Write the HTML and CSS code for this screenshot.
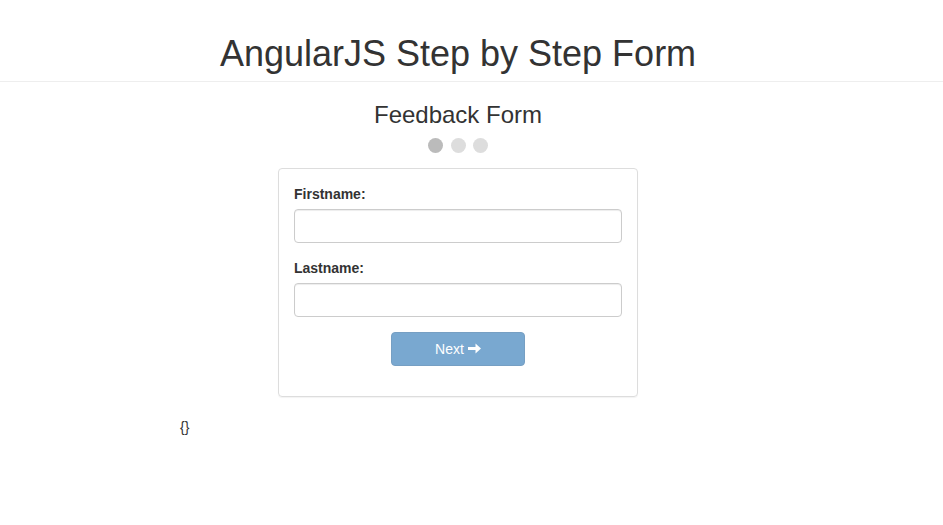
FILE: index.html
```html
<!DOCTYPE html>
<html lang="en">
<head>
    <meta charset="UTF-8">
    <meta name="viewport" content="width=device-width, initial-scale=1.0">
    <title>AngularJS Step by Step Form</title>
    <link rel="stylesheet" href="styles.css">
</head>
<body>
    <div class="page-header">
        <div class="wrap">
            <h1>AngularJS Step by Step Form</h1>
        </div>
    </div>
    <div class="wrap">
        <h3 class="form-title">Feedback Form</h3>
        <div class="steps">
            <span class="step active"></span>
            <span class="step"></span>
            <span class="step"></span>
        </div>
        <form class="step-form">
            <div class="form-group">
                <label for="firstname">Firstname:</label>
                <input type="text" id="firstname" class="form-control">
            </div>
            <div class="form-group">
                <label for="lastname">Lastname:</label>
                <input type="text" id="lastname" class="form-control">
            </div>
            <div class="form-group actions">
                <button type="button" class="btn btn-primary" disabled>
                    Next
                    <svg class="arrow" width="13" height="11" viewBox="0 0 13 11">
                        <path d="M0 4h7.5V0.5L13 5.5 7.5 10.5V7H0z" fill="#fff"/>
                    </svg>
                </button>
            </div>
        </form>
        <div class="model-dump">{}</div>
    </div>
</body>
</html>
```

FILE: styles.css
```css
body {
    margin: 0;
    font-family: "Liberation Sans", Arial, Helvetica, sans-serif;
    font-size: 14px;
    line-height: 20px;
    color: #333;
    background: #fff;
}
.wrap {
    width: 916px;
}
.page-header {
    padding: 34px 0 7px;
    border-bottom: 1px solid #eee;
}
.page-header h1 {
    margin: 0;
    font-size: 36px;
    font-weight: 500;
    line-height: 1.1;
    text-align: center;
}
.form-title {
    margin: 20px 0 10px;
    font-size: 24px;
    font-weight: 500;
    line-height: 1.1;
    text-align: center;
}
.steps {
    display: flex;
    justify-content: center;
    gap: 7.5px;
    margin-bottom: 15px;
}
.step {
    width: 15px;
    height: 15px;
    border-radius: 50%;
    background: #ddd;
}
.step.active {
    background: #bbb;
}
.step-form {
    width: 328px;
    margin: 0 auto;
    padding: 15px;
    border: 1px solid #ddd;
    border-radius: 4px;
    box-shadow: 0 1px 1px rgba(0, 0, 0, .05);
}
.form-group {
    margin-bottom: 15px;
}
.form-group label {
    display: block;
    margin-bottom: 5px;
    font-weight: bold;
}
.form-control {
    display: block;
    box-sizing: border-box;
    width: 100%;
    height: 34px;
    padding: 6px 12px;
    font: inherit;
    border: 1px solid #ccc;
    border-radius: 4px;
    box-shadow: inset 0 1px 1px rgba(0, 0, 0, .075);
}
.actions {
    display: flex;
    justify-content: center;
}
.btn {
    display: flex;
    align-items: center;
    justify-content: center;
    gap: 4px;
    width: 134px;
    height: 34px;
    padding: 6px 12px;
    font: inherit;
    border-radius: 4px;
}
.btn-primary {
    color: #fff;
    background: #337ab7;
    border: 1px solid #2e6da4;
}
.btn-primary:disabled {
    opacity: .65;
}
.arrow {
    display: block;
}
.model-dump {
    margin-top: 20px;
    padding-left: 180px;
}
```
